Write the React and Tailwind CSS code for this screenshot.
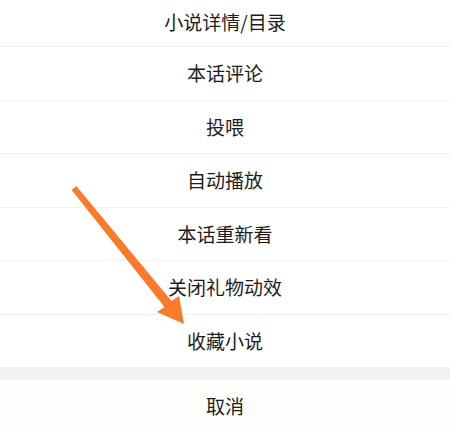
import React from "react";

const items = ["本话评论", "投喂", "自动播放", "本话重新看", "关闭礼物动效", "收藏小说"];

export default function App() {
  return (
    <div
      className="relative w-[450px] h-[433px] overflow-hidden bg-white"
      style={{ fontFamily: '"Noto Sans CJK SC", "Noto Sans", sans-serif' }}
    >
      <div className="flex flex-col">
        <div className="h-[47px] flex items-center justify-center border-b border-[#f1f1f1] text-[19px] text-[#1c1c1c] pb-[2px]">
          小说详情/目录
        </div>
        {items.map((t) => (
          <div
            key={t}
            className="h-[53.5px] flex items-center justify-center border-b border-[#f1f1f1] text-[19px] text-[#1c1c1c]"
          >
            {t}
          </div>
        ))}
        <div className="h-[12px] bg-[#f2f2f2]" />
        <div className="h-[53px] flex items-center justify-center bg-[#fefefc] text-[19px] text-[#1c1c1c]">
          取消
        </div>
      </div>
      <svg
        className="absolute left-0 top-0 pointer-events-none"
        width="450"
        height="433"
        viewBox="0 0 450 433"
      >
        <polygon
          points="71.7,189.9 76.3,186.1 171.5,301 179,296 184,324 157,312 164.5,307"
          fill="#fa7a2c"
        />
      </svg>
    </div>
  );
}
